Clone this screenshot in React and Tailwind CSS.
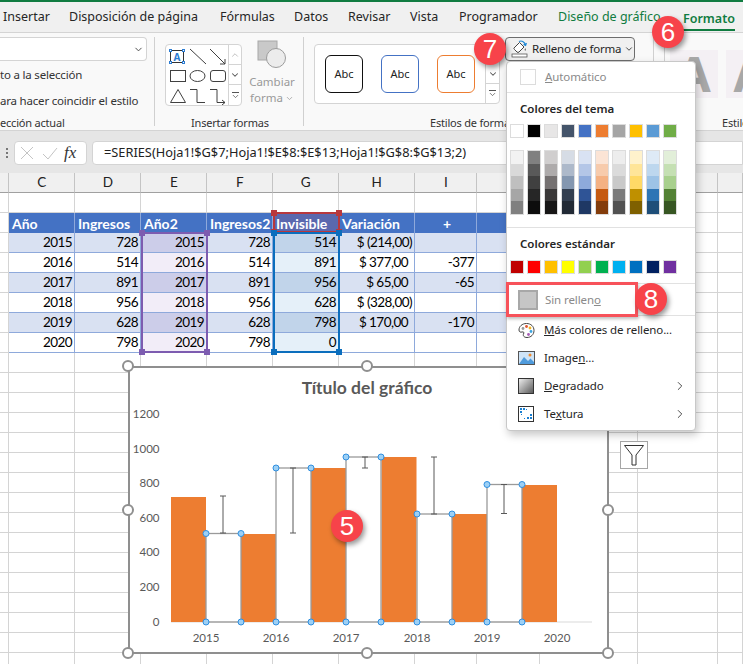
import { ChevronDown, ChevronUp, ChevronRight } from 'lucide-react';

const ui = "font-['Noto_Sans',sans-serif]";
const cellFont = "font-['Lato',sans-serif]";

const tabs = [
  { label: 'Insertar', cls: 'w-[69px] pl-[3px] text-[#262626]' },
  { label: 'Disposición de página', cls: 'w-[151px] text-[#262626]' },
  { label: 'Fórmulas', cls: 'w-[74px] text-[#262626]' },
  { label: 'Datos', cls: 'w-[54px] text-[#262626]' },
  { label: 'Revisar', cls: 'w-[62px] text-[#262626]' },
  { label: 'Vista', cls: 'w-[49px] text-[#262626]' },
  { label: 'Programador', cls: 'w-[99px] text-[#262626]' },
  { label: 'Diseño de gráfico', cls: 'w-[125px] text-[#107c41]' },
];

const themeTop = [
  'bg-[#ffffff]', 'bg-[#000000]', 'bg-[#e7e6e6]', 'bg-[#44546a]', 'bg-[#4472c4]',
  'bg-[#ed7d31]', 'bg-[#a5a5a5]', 'bg-[#ffc000]', 'bg-[#5b9bd5]', 'bg-[#70ad47]',
];

const themeShades = [
  ['bg-[#f2f2f2]', 'bg-[#d9d9d9]', 'bg-[#bfbfbf]', 'bg-[#a6a6a6]', 'bg-[#808080]'],
  ['bg-[#808080]', 'bg-[#595959]', 'bg-[#404040]', 'bg-[#262626]', 'bg-[#0d0d0d]'],
  ['bg-[#d0cece]', 'bg-[#aeabab]', 'bg-[#757171]', 'bg-[#3a3838]', 'bg-[#171616]'],
  ['bg-[#d6dce5]', 'bg-[#adb9ca]', 'bg-[#8497b0]', 'bg-[#333f50]', 'bg-[#222a35]'],
  ['bg-[#d9e2f3]', 'bg-[#b4c6e7]', 'bg-[#8eaadb]', 'bg-[#2f5496]', 'bg-[#1f3864]'],
  ['bg-[#fbe4d5]', 'bg-[#f7cbac]', 'bg-[#f4b183]', 'bg-[#c55a11]', 'bg-[#833c0b]'],
  ['bg-[#ededed]', 'bg-[#dbdbdb]', 'bg-[#c9c9c9]', 'bg-[#7b7b7b]', 'bg-[#525252]'],
  ['bg-[#fff2cc]', 'bg-[#ffe599]', 'bg-[#ffd966]', 'bg-[#bf9000]', 'bg-[#7f6000]'],
  ['bg-[#deeaf6]', 'bg-[#bdd7ee]', 'bg-[#9dc3e6]', 'bg-[#2e75b5]', 'bg-[#1e4e79]'],
  ['bg-[#e2efd9]', 'bg-[#c5e0b3]', 'bg-[#a8d08d]', 'bg-[#538135]', 'bg-[#375623]'],
];

const standard = [
  'bg-[#c00000]', 'bg-[#ff0000]', 'bg-[#ffc000]', 'bg-[#ffff00]', 'bg-[#92d050]',
  'bg-[#00b050]', 'bg-[#00b0f0]', 'bg-[#0070c0]', 'bg-[#002060]', 'bg-[#7030a0]',
];

const columns = [
  { name: '', w: 'w-[9px]' },
  { name: 'C', w: 'w-[66px]' },
  { name: 'D', w: 'w-[66px]' },
  { name: 'E', w: 'w-[66px]' },
  { name: 'F', w: 'w-[66px]' },
  { name: 'G', w: 'w-[66px]' },
  { name: 'H', w: 'w-[76px]' },
  { name: 'I', w: 'w-[62px]' },
  { name: '', w: 'w-[63px]' },
  { name: '', w: 'w-[98px]' },
  { name: '', w: 'w-[80px]' },
  { name: '', w: 'w-[25px]' },
];

const headers = ['Año', 'Ingresos', 'Año2', 'Ingresos2', 'Invisible', 'Variación', '+', ''];

const rows = [
  ['2015', '728', '2015', '728', '514', '$ (214,00)', ''],
  ['2016', '514', '2016', '514', '891', '$ 377,00', '-377'],
  ['2017', '891', '2017', '891', '956', '$ 65,00', '-65'],
  ['2018', '956', '2018', '956', '628', '$ (328,00)', ''],
  ['2019', '628', '2019', '628', '798', '$ 170,00', '-170'],
  ['2020', '798', '2020', '798', '0', '', ''],
];

// white columns of the chart: x1, x2, top
const ghosts = [
  [206, 241, 533.5],
  [276, 311, 468],
  [346, 381, 457],
  [417, 452, 514],
  [487, 522, 484.5],
];

const orange = [
  [171, 497],
  [241, 534],
  [311, 468],
  [381.5, 457],
  [452, 514],
  [522, 485],
];

const errorBars = [
  [223, 496, 533],
  [293, 468, 533],
  [365, 457, 468],
  [434, 457, 514],
  [504, 484.5, 513.5],
];

const yLabels = [
  ['1200', 414],
  ['1000', 449],
  ['800', 483],
  ['600', 518],
  ['400', 552],
  ['200', 587],
  ['0', 622],
];

const xLabels = [
  ['2015', 206],
  ['2016', 276],
  ['2017', 346],
  ['2018', 417],
  ['2019', 487],
  ['2020', 557],
];

const chartHandles = [
  [128, 366], [367, 366], [128, 510], [608, 510], [128, 653], [367, 653], [608, 653],
];

const Badge = ({ n, pos }) => (
  <div className={`absolute z-30 flex h-[32px] w-[32px] items-center justify-center rounded-full bg-[#f7434a] font-['Liberation_Sans',sans-serif] text-[26px] text-white shadow-[2px_3px_5px_rgba(0,0,0,0.4)] ${pos}`}>
    {n}
  </div>
);

const Handle = ({ pos, color }) => (
  <span className={`absolute h-[6px] w-[6px] ${color} ${pos}`} />
);

const Selection = ({ pos, border, color }) => (
  <div className={`pointer-events-none absolute border-2 ${border} ${pos}`}>
    <Handle color={color} pos="-left-[4px] -top-[4px]" />
    <Handle color={color} pos="-right-[4px] -top-[4px]" />
    <Handle color={color} pos="-left-[4px] -bottom-[4px]" />
    <Handle color={color} pos="-right-[4px] -bottom-[4px]" />
  </div>
);

const GridRow = ({ children }) => <div className="flex h-[20px]">{children}</div>;

const plainCell = 'border-b border-r border-[#d4d4d4] bg-white';

const BlankRow = () => (
  <GridRow>
    {columns.map((c, i) => (
      <div key={i} className={`${c.w} ${plainCell}`} />
    ))}
  </GridRow>
);

const cellBg = (col, odd) => {
  if (col === 3) return odd ? 'bg-[#cccde9]' : 'bg-[#f2edf8]';
  if (col === 5) return odd ? 'bg-[#c1d4ea]' : 'bg-[#e5f0f9]';
  return odd ? 'bg-[#d9e1f2]' : 'bg-white';
};

const cellPad = (text) => {
  if (text.startsWith('$') && !text.includes('(')) return 'pr-[6px]';
  return 'pr-[2px]';
};

const Sheet = () => (
  <div className={`${cellFont} text-[13.5px] tracking-[-0.55px] text-black`}>
    <div className="flex h-[20px]">
      {columns.map((c, i) => (
        <div
          key={i}
          className={`${c.w} flex items-center justify-center border-b border-r border-b-[#a0a0a0] border-r-[#c4c4c4] bg-[#f0f0f0] text-[#222222]`}
        >
          {c.name}
        </div>
      ))}
    </div>
    <BlankRow />
    <GridRow>
      {columns.map((c, i) => {
        const inTable = i >= 1 && i <= 8;
        const text = inTable ? headers[i - 1] : '';
        return (
          <div
            key={i}
            className={
              inTable
                ? `${c.w} flex items-center border-r border-[#8ea9db] ${i === 5 ? 'bg-[#5a68ae]' : 'bg-[#4472c4]'} pl-[3px] text-[14px] font-bold tracking-[0px] text-white ${text === '+' ? 'justify-center' : ''}`
                : `${c.w} ${plainCell}`
            }
          >
            {text}
          </div>
        );
      })}
    </GridRow>
    {rows.map((row, r) => (
      <GridRow key={r}>
        {columns.map((c, i) => {
          const inTable = i >= 1 && i <= 8;
          const text = i >= 1 && i <= 7 ? row[i - 1] : '';
          return (
            <div
              key={i}
              className={
                inTable
                  ? `${c.w} flex items-center justify-end border-b border-r border-[#8ea9db] ${cellBg(i, r % 2 === 0)} ${cellPad(text)}`
                  : `${c.w} ${plainCell}`
              }
            >
              {text}
            </div>
          );
        })}
      </GridRow>
    ))}
    {Array.from({ length: 16 }).map((_, i) => (
      <BlankRow key={i} />
    ))}
  </div>
);

const Chart = () => (
  <div className="absolute left-[128px] top-[366px] z-10 h-[288px] w-[481px] border-2 border-[#8f8f8f] bg-white">
    <svg
      className="absolute -left-[2px] -top-[2px] overflow-visible"
      width="481"
      height="288"
      viewBox="128 366 481 288"
      fontFamily="Lato, sans-serif"
    >
      <text x="367" y="394" textAnchor="middle" fontSize="17.5" fontWeight="700" fill="#595959">
        Título del gráfico
      </text>
      {yLabels.map(([t, y]) => (
        <text key={t} x="159.5" y={y + 4} textAnchor="end" fontSize="11.5" fill="#595959">
          {t}
        </text>
      ))}
      {xLabels.map(([t, x]) => (
        <text key={t} x={x} y="641.5" textAnchor="middle" fontSize="11.5" fill="#595959">
          {t}
        </text>
      ))}
      <line x1="171" y1="622" x2="592" y2="622" stroke="#d9d9d9" strokeWidth="1" />
      {orange.map(([x, top]) => (
        <rect key={x} x={x} y={top} width="35" height={622 - top} fill="#ed7d31" />
      ))}
      {ghosts.map(([x1, x2, top]) => (
        <rect key={x1} x={x1} y={top} width={x2 - x1} height={622 - top} fill="white" fillOpacity="0" stroke="#9a9a9a" strokeWidth="1.3" />
      ))}
      {errorBars.map(([x, y1, y2]) => (
        <g key={x} stroke="#595959" strokeWidth="1">
          <line x1={x} y1={y1} x2={x} y2={y2} />
          <line x1={x - 3} y1={y1} x2={x + 3} y2={y1} />
          <line x1={x - 3} y1={y2} x2={x + 3} y2={y2} />
        </g>
      ))}
      {ghosts.map(([x1, x2, top]) =>
        [[x1, top], [x2, top], [x1, 622], [x2, 622]].map(([cx, cy]) => (
          <circle key={`${cx}-${cy}`} cx={cx} cy={cy} r="3" fill="#9dd0f5" stroke="#2f8fe0" strokeWidth="1" />
        )),
      )}
      {chartHandles.map(([cx, cy]) => (
        <circle key={`${cx}-${cy}`} cx={cx} cy={cy} r="5" fill="white" stroke="#8f8f8f" strokeWidth="2" />
      ))}
    </svg>
  </div>
);

const ShapesIcon = () => (
  <svg width="62" height="60" viewBox="0 0 62 60" fill="none" stroke="#404040" strokeWidth="1" className="shrink-0">
    <rect x="4.5" y="5.5" width="13" height="12" stroke="#333" />
    <text x="11" y="15.5" textAnchor="middle" fontSize="10" fontWeight="700" fill="#2b7cd3" stroke="none" fontFamily="Noto Sans, sans-serif">A</text>
    {[[4.5, 5.5], [17.5, 5.5], [4.5, 17.5], [17.5, 17.5]].map(([x, y]) => (
      <rect key={`${x}${y}`} x={x - 1} y={y - 1} width="2" height="2" fill="white" stroke="#2b7cd3" />
    ))}
    <line x1="24" y1="4" x2="40" y2="19" />
    <path d="M44 4 L59 19 M59 14 V19 H54" />
    <rect x="4.5" y="25.5" width="15" height="11" />
    <ellipse cx="31.5" cy="31" rx="7.5" ry="5.5" />
    <rect x="44.5" y="25.5" width="15" height="11" rx="2.5" />
    <path d="M4.5 57.5 L12 44.5 L19.5 57.5 Z" />
    <path d="M24 44.5 H31 V57.5 H39" />
    <path d="M44 44.5 H51 V57.5 H59 M56 55 L59 57.5 L56 60" />
  </svg>
);

const FillIcon = () => (
  <svg width="18" height="18" viewBox="0 0 18 18" fill="none" className="shrink-0">
    <path d="M3 8 L8.5 2.5 L13 7 L8 12 Q7 13 6 12 L3.5 9.5 Q2.5 8.6 3 8 Z" fill="white" stroke="#444" strokeWidth="1" />
    <path d="M8 1.5 Q11 0 13.5 3 L14.5 5 M12.5 4.5 L14.6 5.4 L15.4 3" stroke="#1e88d6" strokeWidth="1.2" />
    <path d="M14.2 8 Q13 10 14.2 11 Q15.5 10 14.2 8 Z" fill="#444" />
    <rect x="1" y="14" width="15" height="3" fill="white" stroke="#555" strokeWidth="0.8" />
  </svg>
);

const PaletteIcon = () => (
  <svg width="17" height="17" viewBox="0 0 17 17">
    <path d="M8.5 1.5 C4 1.5 1 4.5 1 8 C1 10 2.5 10.5 4 10 C5.5 9.6 6.5 10.3 5.5 12 C4.8 13.5 5.8 15.5 9 15.5 C13 15.5 16 12.5 16 8.5 C16 4.5 13 1.5 8.5 1.5 Z" fill="white" stroke="#444" strokeWidth="1" />
    <circle cx="5" cy="6.5" r="1.4" fill="#9a9a9a" />
    <circle cx="8.5" cy="4.5" r="1.4" fill="#e0562f" />
    <circle cx="12" cy="6" r="1.4" fill="#f0b323" />
    <circle cx="13" cy="9.5" r="1.4" fill="#3da5e0" />
    <circle cx="10.5" cy="12.5" r="1.4" fill="#a75db5" />
  </svg>
);

const PictureIcon = () => (
  <svg width="17" height="14" viewBox="0 0 17 14">
    <rect x="0.5" y="0.5" width="16" height="13" fill="#cfe4f7" stroke="#555" />
    <path d="M1 13 L6 6 L10 10 L12.5 7.5 L16 11 V13 Z" fill="#4f9bdc" />
    <circle cx="12" cy="4" r="1.5" fill="#f08a2c" />
  </svg>
);

const GradientIcon = () => (
  <svg width="16" height="16" viewBox="0 0 16 16">
    <defs>
      <linearGradient id="grad" x1="0" y1="0" x2="1" y2="1">
        <stop offset="0" stopColor="#f2f2f2" />
        <stop offset="1" stopColor="#555555" />
      </linearGradient>
    </defs>
    <rect x="0.5" y="0.5" width="15" height="15" fill="url(#grad)" stroke="#333" />
  </svg>
);

const TextureIcon = () => (
  <svg width="16" height="16" viewBox="0 0 16 16" fill="#1b7fd0">
    <rect x="0.5" y="0.5" width="15" height="15" fill="white" stroke="#333" />
    <rect x="2" y="2" width="2" height="2" />
    <rect x="5" y="2" width="2" height="2" />
    <rect x="2" y="5" width="2" height="2" />
    <rect x="8" y="3" width="1" height="1" />
    <rect x="3" y="8" width="1" height="1" />
    <rect x="12" y="8" width="2" height="2" />
    <rect x="9" y="11" width="2" height="2" />
    <rect x="12" y="11" width="2" height="2" />
    <rect x="6" y="12" width="1" height="1" />
  </svg>
);

const Divider = () => <div className="h-px bg-[#e1e1e1]" />;

const MenuItem = ({ icon, children, arrow, cls }) => (
  <div className={`flex items-center pl-[11px] pr-[8px] ${cls}`}>
    <span className="flex w-[26px] items-center">{icon}</span>
    <span className="flex-1 whitespace-nowrap text-[11.5px] tracking-[-0.1px] text-[#262626]">{children}</span>
    {arrow && <ChevronRight size={14} strokeWidth={1.5} className="text-[#333333]" />}
  </div>
);

const Swatch = ({ bg }) => <div className={`h-[14px] w-[14px] border border-[#dcdcdc] ${bg}`} />;

const FillMenu = () => (
  <div className={`absolute left-[506px] top-[61px] z-20 h-[370px] w-[190px] rounded-[4px] border border-[#c8c8c8] bg-white shadow-[2px_4px_8px_rgba(0,0,0,0.22)] ${ui}`}>
    <div className="flex h-[30px] items-center pl-[13px]">
      <div className="mr-[9px] h-[16px] w-[16px] border border-[#dcdcdc]" />
      <span className="text-[11.5px] tracking-[-0.1px] text-[#8a8a8a]"><u>A</u>utomático</span>
    </div>
    <Divider />
    <div className="flex h-[31px] items-center pl-[13px] text-[11.5px] font-semibold text-[#262626]">Colores del tema</div>
    <div className="flex gap-[3px] pl-[3px]">
      {themeTop.map((bg) => (
        <Swatch key={bg} bg={bg} />
      ))}
    </div>
    <div className="mt-[12px] flex gap-[3px] pl-[3px]">
      {themeShades.map((col) => (
        <div key={col[0]} className="flex h-[65px] w-[14px] flex-col border border-[#dcdcdc]">
          {col.map((bg) => (
            <div key={bg} className={`flex-1 ${bg}`} />
          ))}
        </div>
      ))}
    </div>
    <div className="mt-[12px]">
      <Divider />
    </div>
    <div className="flex h-[32px] items-center pl-[13px] text-[11.5px] font-semibold text-[#262626]">Colores estándar</div>
    <div className="flex gap-[3px] pl-[3px]">
      {standard.map((bg) => (
        <Swatch key={bg} bg={bg} />
      ))}
    </div>
    <div className="mt-[9px]">
      <Divider />
    </div>
    <div className="relative flex h-[31px] items-center pl-[11px]">
      <div className="mr-[7px] flex h-[20px] w-[20px] items-center justify-center border-2 border-[#a8a8a8] bg-[#c6c6c6]" />
      <span className="text-[11.5px] tracking-[-0.1px] text-[#8a8a8a]">Sin rellen<u>o</u></span>
      <div className="absolute -left-[1px] -top-[2px] h-[35px] w-[132px] border-[3px] border-[#f7525a] shadow-[1px_2px_3px_rgba(0,0,0,0.25)]" />
    </div>
    <Divider />
    <MenuItem cls="h-[28px]" icon={<PaletteIcon />}><u>M</u>ás colores de relleno...</MenuItem>
    <MenuItem cls="h-[28px]" icon={<PictureIcon />}>Image<u>n</u>...</MenuItem>
    <MenuItem cls="h-[28px]" icon={<GradientIcon />} arrow><u>D</u>egradado</MenuItem>
    <MenuItem cls="h-[28px]" icon={<TextureIcon />} arrow>Te<u>x</u>tura</MenuItem>
  </div>
);

const AbcBox = ({ border }) => (
  <div className={`flex h-[38px] w-[38px] shrink-0 items-center justify-center rounded-[6px] border bg-white text-[11px] text-[#222222] ${border}`}>
    Abc
  </div>
);

const GroupLabel = ({ children, cls }) => (
  <div className={`-mb-[5px] mt-auto text-[11px] leading-[16px] tracking-[-0.2px] text-[#333333] ${cls}`}>{children}</div>
);

const Ribbon = () => (
  <div className="flex h-[98px] overflow-hidden border-t border-[#d4d4d4] bg-[#f9f9f9] text-[#333333]">
    <div className="my-[4px] flex w-[155px] shrink-0 flex-col border-r border-[#d0d0d0]">
      <div className="flex h-[24px] w-[147px] items-center justify-end rounded-r-[4px] border border-l-0 border-[#d4d4d4] bg-white pr-[2px]">
        <ChevronDown size={11} strokeWidth={2} className="text-[#444444]" />
      </div>
      <div className="mt-[4px] text-[11.5px] leading-[20px] tracking-[-0.2px]">to a la selección</div>
      <div className="mt-[6px] whitespace-nowrap text-[11.5px] leading-[20px] tracking-[-0.2px]">ara hacer coincidir el estilo</div>
      <GroupLabel>ección actual</GroupLabel>
    </div>
    <div className="my-[4px] flex w-[149px] shrink-0 flex-col border-r border-[#d0d0d0] pl-[10px]">
      <div className="mt-[7px] flex">
        <div className="flex h-[62px] w-[77px] shrink-0 rounded-[4px] border border-[#d4d4d4] bg-white">
          <ShapesIcon />
          <div className="flex w-[14px] flex-col border-l border-[#d4d4d4] text-[#555555]">
            <div className="flex h-[20px] items-center justify-center border-b border-[#d4d4d4]"><ChevronUp size={10} className="text-[#b4b4b4]" /></div>
            <div className="flex h-[20px] items-center justify-center border-b border-[#d4d4d4]"><ChevronDown size={10} strokeWidth={2.5} /></div>
            <div className="flex flex-1 flex-col items-center justify-center">
              <span className="mb-[1px] h-px w-[7px] bg-[#555555]" />
              <ChevronDown size={9} strokeWidth={2} className="-my-[2px]" />
            </div>
          </div>
        </div>
        <div className="ml-[7px] flex w-[46px] flex-col items-center text-[11.5px] leading-[16px] text-[#9a9a9a]">
          <svg width="30" height="30" viewBox="0 0 30 30" className="-mt-[4px] mb-[4px]">
            <rect x="1" y="1" width="19" height="19" fill="#c9c9c9" stroke="#a8a8a8" />
            <circle cx="19" cy="18" r="9.5" fill="#ececec" stroke="#9c9c9c" />
          </svg>
          <span>Cambiar</span>
          <span className="flex items-center gap-[2px]">forma<ChevronDown size={9} /></span>
        </div>
      </div>
      <GroupLabel cls="pl-[26px]">Insertar formas</GroupLabel>
    </div>
    <div className="my-[4px] flex w-[350px] shrink-0 flex-col border-r border-[#d0d0d0]">
      <div className="flex">
        <div className="ml-[10px] mt-[7px] flex h-[60px] w-[186px] shrink-0 rounded-[4px] border border-[#d4d4d4] bg-white pl-[10px] pt-[10px]">
          <AbcBox border="border-[#111111]" />
          <div className="w-[18px] shrink-0" />
          <AbcBox border="border-[#4472c4]" />
          <div className="w-[18px] shrink-0" />
          <AbcBox border="border-[#ed7d31]" />
          <div className="ml-[10px] -mt-[10px] flex w-[14px] shrink-0 flex-col border-l border-[#d4d4d4] text-[#555555]">
            <div className="h-[20px]" />
            <div className="flex h-[19px] items-center justify-center border-b border-[#d4d4d4]"><ChevronDown size={10} strokeWidth={2.5} /></div>
            <div className="flex flex-1 flex-col items-center justify-center">
              <span className="mb-[1px] h-px w-[7px] bg-[#555555]" />
              <ChevronDown size={9} strokeWidth={2} className="-my-[2px]" />
            </div>
          </div>
        </div>
        <div className="ml-[5px] flex h-[24px] w-[130px] shrink-0 items-center gap-[3px] whitespace-nowrap rounded-[4px] border border-[#6d6d6d] bg-[#f0f0f0] pl-[5px] text-[11.5px] tracking-[-0.2px] text-[#262626]">
          <FillIcon />
          Relleno de forma
          <ChevronDown size={10} strokeWidth={2} className="shrink-0" />
        </div>
      </div>
      <GroupLabel cls="pl-[126px] whitespace-nowrap">Estilos de forma</GroupLabel>
    </div>
    <div className="my-[4px] w-[11px] shrink-0 border-r border-[#d0d0d0]" />
    <div className="my-[4px] flex min-w-0 flex-1 flex-col">
      <div className="ml-[5px] mt-[13px] flex gap-[8px]">
        <div className="flex h-[48px] w-[48px] shrink-0 items-center justify-center bg-[#f4f0f4] text-[48px] font-bold text-[#a8a8a8]">A</div>
        <div className="flex h-[48px] w-[48px] shrink-0 items-center justify-center bg-[#f4f0f4] text-[48px] font-bold text-[#a8a8a8]">A</div>
      </div>
      <GroupLabel cls="pl-[57px] whitespace-nowrap">Estilos</GroupLabel>
    </div>
  </div>
);

const FormulaBar = () => (
  <div className="flex h-[42px] items-start bg-[#e6e6e6] pt-[10px]">
    <div className="flex h-[24px] w-[14px] flex-col items-center justify-center gap-[2px]">
      <span className="h-[2px] w-[2px] bg-[#777777]" />
      <span className="h-[2px] w-[2px] bg-[#777777]" />
      <span className="h-[2px] w-[2px] bg-[#777777]" />
    </div>
    <div className="flex h-[24px] w-[73px] items-center rounded-[4px] border border-[#d4d4d4] bg-white pl-[5px]">
      <svg width="38" height="16" viewBox="0 0 38 16" fill="none" stroke="#c4c4c4" strokeWidth="1">
        <path d="M1 2 L13 14 M13 2 L1 14" />
        <path d="M23 9 L28 14 L37 3" />
      </svg>
      <span className="ml-[6px] font-['Liberation_Serif',serif] text-[17px] italic text-[#333333]">fx</span>
    </div>
    <div className="ml-[5px] flex h-[24px] flex-1 items-center whitespace-nowrap rounded-l-[4px] border border-[#d4d4d4] bg-white pl-[11px] text-[12.8px] text-[#222222]">
      =SERIES(Hoja1!$G$7;Hoja1!$E$8:$E$13;Hoja1!$G$8:$G$13;2)
    </div>
  </div>
);

export default function App() {
  return (
    <div className={`relative h-[664px] w-[743px] overflow-hidden bg-white ${ui}`}>
      <div className="h-[2px] bg-[#107c41]" />
      <div className="flex h-[30px] items-center bg-[#f0f0f0] text-[12.5px]">
        {tabs.map((t) => (
          <div key={t.label} className={`shrink-0 whitespace-nowrap ${t.cls}`}>
            {t.label}
          </div>
        ))}
        <div className="flex h-full flex-col justify-center pt-[5px] font-semibold text-[#107c41]">
          <span className="border-b-2 border-[#107c41] pb-[1px] leading-[19px]">Formato</span>
        </div>
      </div>
      <Ribbon />
      <div className="h-px bg-[#d4d4d4]" />
      <FormulaBar />
      <Sheet />

      <Selection pos="left-[141px] top-[232px] h-[121px] w-[67px]" border="border-[#7d5cb0]" color="bg-[#7d5cb0]" />
      <Selection pos="left-[273px] top-[212px] h-[21px] w-[67px]" border="border-[#b8383d]" color="bg-[#b8383d]" />
      <Selection pos="left-[273px] top-[232px] h-[121px] w-[67px]" border="border-[#0b6ebd]" color="bg-[#0b6ebd]" />

      <Chart />

      <div className="absolute left-[620px] top-[441px] z-10 flex h-[28px] w-[28px] items-center justify-center border border-[#a6a6a6] bg-white">
        <svg width="22" height="24" viewBox="0 0 22 24" fill="none" stroke="#333333" strokeWidth="1">
          <path d="M1.5 2.5 H20.5 L13 12 V22 H9 V12 Z" />
        </svg>
      </div>

      <FillMenu />

      <Badge n="5" pos="left-[331px] top-[510px]" />
      <Badge n="6" pos="left-[652px] top-[16px]" />
      <Badge n="7" pos="left-[474px] top-[33px]" />
      <Badge n="8" pos="left-[635px] top-[283px]" />
    </div>
  );
}
